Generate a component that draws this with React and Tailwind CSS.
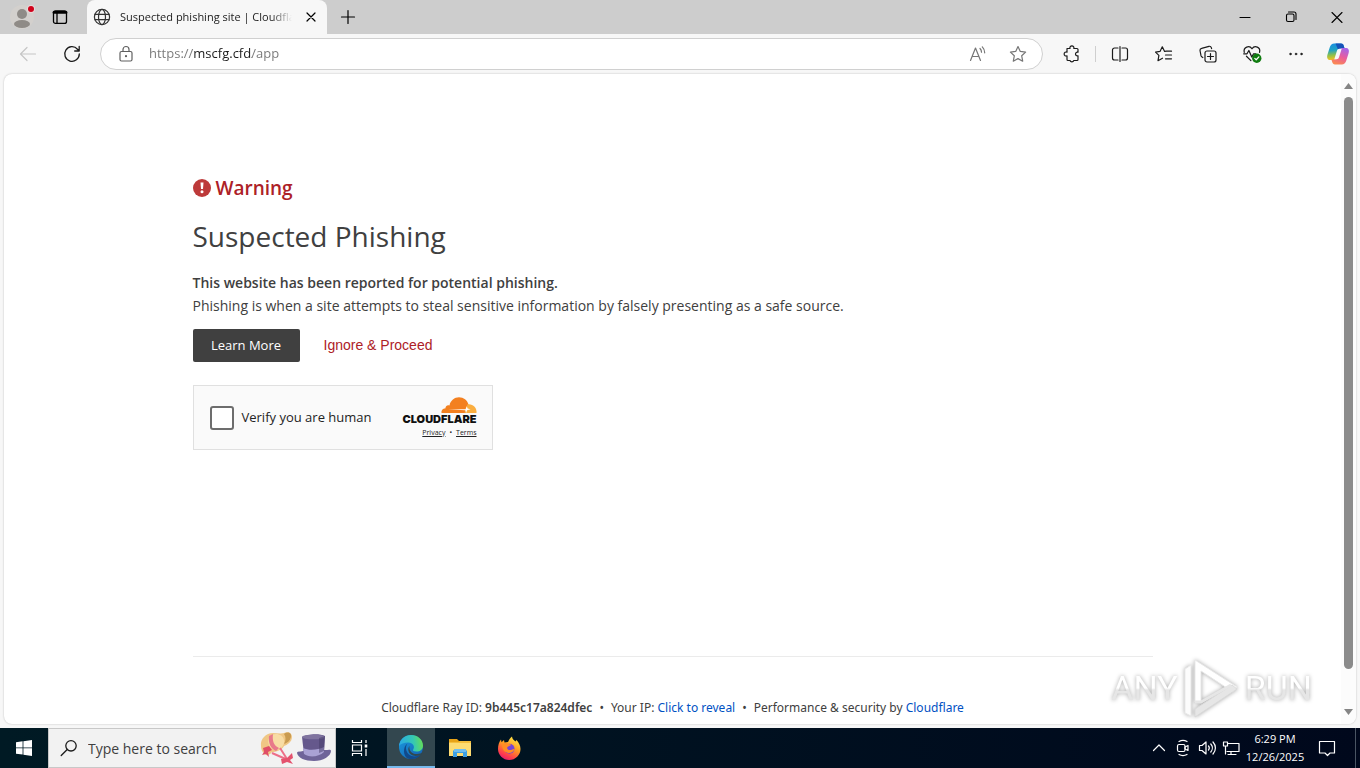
import { useState } from "react";

const ui = "font-['Open_Sans','Noto_Sans',sans-serif]";

/* ===== Browser icons ===== */
function Line({ size = 18, children, className = "", width = 1.2 }) {
  return (
    <svg width={size} height={size} viewBox="0 0 18 18" fill="none" stroke="currentColor" strokeWidth={width} strokeLinecap="round" strokeLinejoin="round" className={className} aria-hidden="true">
      {children}
    </svg>
  );
}

const Globe = () => (
  <Line width={1.2} className="shrink-0 text-[#333]">
    <circle cx="9" cy="9" r="7.6" />
    <ellipse cx="9" cy="9" rx="3.5" ry="7.6" />
    <path d="M2 6.3h14M2 11.7h14" />
  </Line>
);

const Copilot = () => (
  <svg width="24" height="24" viewBox="0 0 24 24" aria-hidden="true">
    <defs>
      <linearGradient id="cpA" x1="0.3" y1="0" x2="0.4" y2="1">
        <stop offset="0" stopColor="#1a8fe0" />
        <stop offset="0.4" stopColor="#20a3c4" />
        <stop offset="0.7" stopColor="#8fc04a" />
        <stop offset="1" stopColor="#fbc31c" />
      </linearGradient>
      <linearGradient id="cpB" x1="0.7" y1="0" x2="0.3" y2="1">
        <stop offset="0" stopColor="#a565e8" />
        <stop offset="0.5" stopColor="#ea5c9c" />
        <stop offset="1" stopColor="#fb8a50" />
      </linearGradient>
    </defs>
    <path d="M15 1.5c1.6 0 2.3.8 2.8 2.4l.8 2.6h-3c-1.5 0-2.5.8-3 2.4l-2 6.6c-.5 1.6-1.2 2.5-3 2.5H4.500c-3 0-4-2-3-5.500L3.700 5.500C4.600 2.700 6 1.500 8.200 1.500z" fill="url(#cpA)" />
    <path d="M9.500 1.500H15c1.600 0 2.300.8 2.800 2.400l.8 2.600h-3c-1.500 0-2.500.8-3 2.400z" fill="#1652b8" />
    <path d="M9 22.500c-1.600 0-2.300-.8-2.800-2.400L5.400 17.500h3c1.500 0 2.500-.8 3-2.400l2-6.600c.5-1.600 1.200-2.500 3-2.500h3.100c3 0 4 2 3 5.500l-2.200 7c-.9 2.800-2.300 4-4.500 4z" fill="url(#cpB)" />
    <path d="M8.300 17.300 10.900 9c.4-1.500 1.200-2.200 2.500-2.200h2.300l-2.600 8.300c-.5 1.500-1.200 2.200-2.500 2.200z" fill="#f8f8f8" />
  </svg>
);

function IconButton({ label, children, className = "" }) {
  return (
    <button type="button" aria-label={label} className={`flex h-8 w-8 shrink-0 items-center justify-center rounded hover:bg-black/5 ${className}`}>
      {children}
    </button>
  );
}

function TabBar() {
  return (
    <header className="flex h-[34px] shrink-0 items-stretch bg-[#cdcdcd]">
      <div className="flex w-[87px] shrink-0 items-center gap-[6px] pl-[6px]">
        <IconButton label="Profile">
          <svg width="28" height="28" viewBox="0 0 28 28" aria-hidden="true">
            <circle cx="14" cy="14" r="12" fill="#d3d0cd" />
            <circle cx="14" cy="11" r="5" fill="#8f8b87" />
            <ellipse cx="14" cy="21" rx="8" ry="4" fill="#8f8b87" />
            <circle cx="23" cy="6" r="4" fill="#e8d8d8" />
            <circle cx="23" cy="6" r="3" fill="#d0021b" />
          </svg>
        </IconButton>
        <IconButton label="Tab actions">
          <Line size={18} width={1.3}>
            <rect x="2.5" y="2.8" width="13" height="12.6" rx="2" />
            <path d="M3 4.400h12" strokeWidth="2.800" />
            <path d="M6 5v10" />
          </Line>
        </IconButton>
      </div>
      <div className="flex w-60 items-center gap-[9px] rounded-t-lg bg-[#f7f7f7] pr-[6px] pl-[6px]">
        <Globe />
        <span className="min-w-0 flex-1 overflow-hidden text-[11px] whitespace-nowrap text-[#1b1b1b] [mask-image:linear-gradient(to_right,black_88%,transparent)]">
          Suspected phishing site | Cloudflare
        </span>
        <button type="button" aria-label="Close tab" className="flex h-5 w-5 shrink-0 items-center justify-center rounded">
          <Line size={18}><path d="m5 5 8 8M13 5l-8 8" /></Line>
        </button>
      </div>
      <IconButton label="New tab" className="ml-[5px] self-center">
        <Line><path d="M9 2.500v13M2.500 9h13" /></Line>
      </IconButton>
      <div className="ml-auto flex">
        <button type="button" aria-label="Minimize" className="flex w-[46px] items-center justify-center"><Line width={1.1}><path d="M4 9.500h10" /></Line></button>
        <button type="button" aria-label="Restore" className="flex w-[46px] items-center justify-center">
          <Line width={1.1}><rect x="4.500" y="6" width="7.500" height="7.500" rx="1.500" /><path d="M6.500 4h5.500a2 2 0 0 1 2 2v5.500" /></Line>
        </button>
        <button type="button" aria-label="Close" className="flex w-[46px] items-center justify-center"><Line width={1.1}><path d="m4 4.500 10 10M14 4.500l-10 10" /></Line></button>
      </div>
    </header>
  );
}

function Toolbar() {
  const [url, setUrl] = useState("https://mscfg.cfd/app");
  return (
    <nav className="flex h-10 shrink-0 items-center bg-[#f7f7f7] pr-[6px] pl-3 text-[#1b1b1b]">
      <IconButton label="Back" className="text-[#c6c6c6]">
        <Line><path d="M16.500 9h-15M8 2.500 1.500 9 8 15.500" /></Line>
      </IconButton>
      <IconButton label="Refresh" className="ml-3">
        <Line width={1.3}><path d="M16.300 9A7.300 7.300 0 1 1 14.500 4.200L16 5.800M16.200 1.500v4.500h-4.500" /></Line>
      </IconButton>
      <div className="ml-3 flex h-8 min-w-0 flex-1 items-center rounded-full border border-[#d0d0d0] bg-white pr-2 pl-4">
        <Line className="shrink-0 text-[#606060]">
          <rect x="3" y="6.500" width="12" height="9.500" rx="1.500" />
          <path d="M6 6.500V4.500a3 3 0 0 1 6 0v2" />
          <circle cx="9" cy="11.200" r=".5" fill="currentColor" />
        </Line>
        <input
          type="text"
          aria-label="Address and search bar"
          value={url}
          onChange={(e) => setUrl(e.target.value)}
          className="ml-[14px] min-w-0 flex-1 bg-[linear-gradient(to_right,#767676_44px,#1b1b1b_44px,#1b1b1b_103px,#767676_103px)] bg-clip-text text-[13px] text-transparent outline-none"
        />
        <IconButton label="Read aloud" className="text-[#767676]">
          <Line>
            <path d="M1.500 15.500 6.500 3l5 12.500M3.200 11.500h6.600" />
            <path d="M11 3.500c1 1 1.500 2.200 1.500 3.700M13.300 1.800c1.600 1.600 2.400 3.500 2.400 6" />
          </Line>
        </IconButton>
        <IconButton label="Add to favorites" className="ml-2 text-[#767676]">
          <Line><path d="m9 1.500 2.300 4.900 5.300.7-3.900 3.700 1 5.400L9 13.600l-4.700 2.600 1-5.400L1.400 7.100l5.300-.7z" /></Line>
        </IconButton>
      </div>
      <IconButton label="Extensions" className="ml-[13px]">
        <Line width={1.2}>
          <path d="M4 3.500h3a2 2 0 1 1 3.800 0H14a1 1 0 0 1 1 1v2.700a1.900 1.900 0 1 0 0 3.600v3.700a1 1 0 0 1-1 1h-3.200a2 2 0 0 1-3.800 0H5a1 1 0 0 1-1-1v-3.700a2 2 0 1 1 0-3.600z" />
        </Line>
      </IconButton>
      <span className="mr-2 ml-[7px] h-4 w-px bg-[#cfcfcf]" />
      <div className="flex gap-3">
        <IconButton label="Split screen">
          <Line><path d="M7 3H3.500a2 2 0 0 0-2 2v8a2 2 0 0 0 2 2H7M11 3h3.500a2 2 0 0 1 2 2v8a2 2 0 0 1-2 2H11M9 1.500v15" /></Line>
        </IconButton>
        <IconButton label="Favorites">
          <Line><path d="m9.600 6.400 2-.2H16.500M9.600 6.400 7.300 1.800 5 6.400l-4.500.7 3.400 3.300-.9 5.300 4.500-2.500M10.500 10h6M10.500 13.800h6" /></Line>
        </IconButton>
        <IconButton label="Collections">
          <Line>
            <rect x="6" y="6" width="11" height="11" rx="2" />
            <path d="M11.500 8.500v6M8.500 11.500h6M3.800 12.500 3 12a2 2 0 0 1-1-1.300L1 5.500a2 2 0 0 1 1.600-2.200L10 1.300a2 2 0 0 1 2.300 1.400l.3 1" />
          </Line>
        </IconButton>
        <IconButton label="Browser essentials">
          <Line size={20} width={1.1}>
            <path d="M2 7.500C1 3 6.500.5 9 4.300 11.500.5 17 3 15.800 7.500M4 11l4 4M1.500 8.800h3l1.700-3 2.600 6 1.600-3h2" />
            <circle cx="13.300" cy="12.800" r="4.200" fill="#107c10" stroke="none" />
            <path d="m11.500 12.900 1.300 1.300 2.400-2.600" stroke="#fff" />
          </Line>
        </IconButton>
        <IconButton label="Settings and more">
          <Line><g fill="currentColor" strokeWidth=".4"><circle cx="3.500" cy="9" r="1" /><circle cx="9" cy="9" r="1" /><circle cx="14.500" cy="9" r="1" /></g></Line>
        </IconButton>
      </div>
      <IconButton label="Copilot" className="ml-[10px]"><Copilot /></IconButton>
    </nav>
  );
}

/* ===== Cloudflare widget ===== */
function Turnstile() {
  return (
    <div className="mt-[23px] flex h-[65px] w-[300px] items-center border border-[#e0e0e0] bg-[#fafafa] pr-[15px] pl-4">
      <label className="flex items-center gap-2 text-[13px] text-[#232323]">
        <input type="checkbox" className="h-6 w-6 appearance-none rounded-[3px] border-2 border-[#6d6d6d] bg-white checked:bg-[#c44d0e]" />
        Verify you are human
      </label>
      <div className="ml-auto flex flex-col items-end">
        <svg width="36" height="16" viewBox="0 0 36 16" aria-hidden="true">
          <path d="M.5 16c-.4-2.700 1-4.600 4-4.800-.3-2 1.800-3.700 4-2.800C9.500 3.500 13.500.3 18 .3c4.600 0 8.300 3 9.500 7.200L26 16z" fill="#f38020" />
          <path d="M26.500 7.300c5.300-.7 9.500 3 9 8.700H23.500z" fill="#faae40" />
          <path d="M7 12.300h17.500l1.300-3 .8 2.200 3 .8-3.500 1-1 2.700-.8-2.800z" fill="#fff" />
        </svg>
        <span className="font-['Inter',sans-serif] text-[11px] leading-3 font-black text-[#111]">CLOUDFLARE</span>
        <div className="mt-[2px] flex gap-1 text-[7px] leading-3 text-[#232323]">
          <a href="#privacy" className="underline">Privacy</a>
          <span>•</span>
          <a href="#terms" className="underline">Terms</a>
        </div>
      </div>
    </div>
  );
}

const markText = "bg-linear-to-b from-white from-50% to-[#e6e6e6] to-55% bg-clip-text text-transparent";

function Watermark() {
  return (
    <div className="pointer-events-none absolute right-11 bottom-1 flex items-center gap-[5px] font-['Roboto',sans-serif] text-[34px] leading-[40px] drop-shadow-[0_0_2px_#a8a8a8]">
      <span className={markText}>ANY</span>
      <svg width="57" height="64" viewBox="0 0 57 64" fill="none" strokeLinejoin="round" aria-hidden="true">
        <path d="M12 46V4l42 27-4 5-32-21v31z" fill="#fff" stroke="#e9e9e9" strokeWidth="1" />
        <path d="M8 9 2 13v44l6 3z" fill="#fcfcfc" stroke="#e9e9e9" strokeWidth="1" />
        <path d="m12 53 37-24 5 4-42 28z" fill="#e6e6e6" stroke="#dadada" strokeWidth="1" />
        <path d="M12 46h6l30-17" stroke="#e6e6e6" strokeWidth="3" />
      </svg>
      <span className={markText}>RUN</span>
    </div>
  );
}

function Page() {
  return (
    <main className="relative mx-1 mb-1 flex min-h-0 flex-1 overflow-hidden rounded-lg bg-white shadow-[0_0_2px_rgba(0,0,0,0.25)]">
      <div className="min-w-0 flex-1 overflow-hidden">
        <div className="mx-auto flex h-full max-w-[960px] flex-col text-[#404040]">
          <h2 className="mt-[99px] flex items-center gap-[5px] text-[19px] leading-[30px] font-semibold text-[#ad2127]">
            <svg width="18" height="18" viewBox="0 0 18 18" aria-hidden="true">
              <circle cx="9" cy="9" r="9" fill="#bd3a3a" />
              <path d="M7.500 3.500h3L10 10H8z" fill="#fff" />
              <circle cx="9" cy="12.800" r="1.500" fill="#fff" />
            </svg>
            Warning
          </h2>
          <h1 className="mt-3 text-[28px] leading-[42px]">Suspected Phishing</h1>
          <div className="mt-[14px] text-[14px] leading-[23px]">
            <strong className="font-semibold">This website has been reported for potential phishing.</strong>
            <p>Phishing is when a site attempts to steal sensitive information by falsely presenting as a safe source.</p>
          </div>
          <div className="mt-3 flex items-center gap-6">
            <button type="button" className="h-[33px] w-[107px] rounded-[2px] bg-[#404040] text-[13px] text-white">Learn More</button>
            <button type="button" className="font-['Liberation_Sans',Arial,sans-serif] text-[14px] text-[#ad2127]">Ignore &amp; Proceed</button>
          </div>
          <Turnstile />
          <footer className="mt-auto border-t border-[#ebebeb] pt-[41px] pb-[6px] text-center font-['Noto_Sans',sans-serif] text-[12px] leading-5">
            Cloudflare Ray ID: <strong className="font-semibold">9b445c17a824dfec</strong>
            <span className="mx-[7px]">•</span>
            Your IP: <button type="button" className="text-[#0051c3]">Click to reveal</button>
            <span className="mx-[7px]">•</span>
            Performance &amp; security by <a href="#cloudflare" className="text-[#0051c3]">Cloudflare</a>
          </footer>
        </div>
      </div>
      {/* scrollbar */}
      <div className="flex w-[15px] shrink-0 flex-col items-center bg-[#fcfcfc] pt-[9px] pb-[9px]">
        <svg width="9" height="6" viewBox="0 0 9 6" aria-hidden="true"><path d="M0 6 4.500 0 9 6z" fill="#858585" /></svg>
        <div className="mt-2 mb-10 w-[9px] flex-1 rounded-full bg-[#8b8b8b]" />
        <svg width="9" height="6" viewBox="0 0 9 6" aria-hidden="true"><path d="M0 0 4.500 6 9 0z" fill="#858585" /></svg>
      </div>
      <Watermark />
    </main>
  );
}

/* ===== Taskbar ===== */
const SunHat = () => (
  <svg width="34" height="34" viewBox="0 0 34 34" aria-hidden="true">
    <path d="M1 15C0 8 6 2 13 2c4 0 8 1 11 0 4-2 8 0 8 4 0 5-5 8-8 9-2 4-8 6-12 6-3 4-7 4-8 1-2-1-3-4-3-7z" fill="#f0c785" />
    <path d="M10 5c5-4 13-2 14 4 1 5-3 10-9 10-6-1-9-9-5-14z" fill="#f8dca4" />
    <path d="M24 3c4-3 8-1 7 3-1 4-4 6-7 7 2-4 2-7 0-10z" fill="#c99b50" />
    <path d="m9 5 4-2c-1 7 1 12 6 14l-3 3C11 18 8 12 9 5z" fill="#e8798a" />
    <path d="m3 17 6-2 3 4-4 2 1 5-3-3-4 1 2-3z" fill="#e04f68" />
    <path d="m20 17 7 11M12 22l16 7" stroke="#ed6f88" strokeWidth="2" />
    <path d="m21 28 6-1 5-5 1 5-3 2 3 4-6-2-5 2z" fill="#e4526e" />
  </svg>
);

const TopHat = () => (
  <svg width="34" height="28" viewBox="0 0 34 28" aria-hidden="true">
    <path d="M0 19c0-2 3-1 6-2l22-1c3 0 6-1 6 1 0 5-8 10-17 10S1 24 0 19z" fill="#6f6499" />
    <path d="M5 3c4-3 18-4 23-1l-1 16c-5 5-15 6-20 2z" fill="#65588c" />
    <path d="M6 14c6 3 15 2 21-1v5c-5 5-15 6-20 2z" fill="#a9a1d4" />
    <ellipse cx="16.500" cy="3" rx="11.500" ry="2.300" fill="#80749f" />
    <path d="M22 4v15l5-2 1-15z" fill="#463b68" opacity=".5" />
  </svg>
);

const Edge = () => (
  <svg width="26" height="26" viewBox="0 0 26 26" aria-hidden="true">
    <defs>
      <linearGradient id="edA" x1="0" y1=".5" x2="1" y2=".4"><stop offset="0" stopColor="#2aa9e6" /><stop offset=".6" stopColor="#35c8b3" /><stop offset="1" stopColor="#66de54" /></linearGradient>
      <linearGradient id="edB" x1="0" y1="0" x2=".8" y2="1"><stop offset="0" stopColor="#1b9bde" /><stop offset="1" stopColor="#1465b6" /></linearGradient>
    </defs>
    <circle cx="13" cy="13" r="12" fill="url(#edB)" />
    <path d="M1 12C1.500 5.500 7 1 13 1c7 0 12 5 12 10.500 0 4-3 6-6.500 6-3 0-4-1-3.300-2 2-3-.2-7-5-7C6 8.500 2.500 10 1 12z" fill="url(#edA)" />
    <path d="M9.500 9.500C6.500 13 8 20 13.500 22c4 1.200 7.500-.2 10-2.500C20 25 14 26 10 24.500 5 22.500 4.500 13 9.500 9.500z" fill="#114a8b" />
    <path d="M11.500 12c-1 5 3 8.500 8 8 2 0 4-.8 5-1.500l-.8 1.700c-2 1.300-5.700 2.300-8.700 1.300-4.500-1.500-6-6.500-3.500-9.500z" fill="#31484f" />
  </svg>
);

const Folder = () => (
  <svg width="24" height="20" viewBox="0 0 24 20" aria-hidden="true">
    <path d="M1 1h8l2 2h11v4H1z" fill="#e8a317" />
    <path d="M1 4h22v14H1z" fill="#fddb72" />
    <path d="M1 4h10l1-1h11v2H1z" fill="#f4bd3b" />
    <path d="M5 19v-6l2-2h10l2 2v6h-4v-4H9v4z" fill="#3da0e4" />
    <path d="M7 11h10l1 1v2H6v-2z" fill="#6fbdf0" />
  </svg>
);

const Firefox = () => (
  <svg width="24" height="24" viewBox="0 0 24 24" aria-hidden="true">
    <defs>
      <linearGradient id="ffx" x1=".8" y1="0" x2=".3" y2="1"><stop offset="0" stopColor="#fff04a" /><stop offset=".45" stopColor="#ff9a22" /><stop offset=".8" stopColor="#ff3f4b" /><stop offset="1" stopColor="#e51c70" /></linearGradient>
    </defs>
    <path d="M1 13C1 9 2 6 4 3.500l.5 2.700L7 4l.5 2.500L11 6c1-2.500 2.500-4.500 4-5.500.2 2.500 2 3.500 3.500 5l1-1.500c2.300 2.500 4 5.500 4 9C23.500 19 18.500 24 12.200 24 6 24 1 19 1 13z" fill="url(#ffx)" />
    <circle cx="12.500" cy="12.800" r="5" fill="#7544d8" />
    <path d="M5 9c1.500-2 4-2.500 6-1.500 1 .5 2 1 3.500 1-1 1.500-3 1.500-4 2.500-1 1.200.3 3 2.500 3 2 0 3-1.300 4.500-1-1 3-4 4.500-7 3.700C7 16 5 12.500 5 9z" fill="#ff8d24" />
  </svg>
);

function Taskbar() {
  const [query, setQuery] = useState("");
  return (
    <footer className="flex h-10 shrink-0 bg-linear-to-r from-[#001a24] to-[#00081c] text-white">
      <button type="button" aria-label="Start" className="flex w-12 items-center justify-center">
        <svg width="16" height="16" viewBox="0 0 16 16" fill="#fff" aria-hidden="true"><path d="M0 2.200 6.600 1.300v6.200H0zM7.400 1.200 16 0v7.500H7.400zM0 8.300h6.600v6.300L0 13.700zM7.400 8.300H16V16l-8.600-1.200z" /></svg>
      </button>
      <div className="flex w-72 items-center border border-[#c8c8c8] bg-[#f2f2f2] pr-1 pl-[11px] text-[#1b1b1b]">
        <Line className="shrink-0" width={1.3}><circle cx="11" cy="6.800" r="5.200" /><path d="m7.200 10.500-6 6" /></Line>
        <input
          type="text"
          aria-label="Search"
          placeholder="Type here to search"
          value={query}
          onChange={(e) => setQuery(e.target.value)}
          className="ml-[10px] min-w-0 flex-1 bg-transparent text-[14px] outline-none placeholder:text-[#404040]"
        />
        <div className="flex items-center gap-[3px]"><SunHat /><TopHat /></div>
      </div>
      <button type="button" aria-label="Task view" className="mr-[3px] flex w-12 items-center justify-center">
        <svg width="18" height="18" viewBox="0 0 18 18" fill="none" stroke="#fff" strokeWidth="1.200" aria-hidden="true">
          <path d="M1.500 1v2.500h9V1M1.500 17v-2.500h9V17M1.500 6h9v6h-9zM15 1v3M15 10v7" />
          <path d="M13.700 5.500h2.600v3h-2.600z" fill="#fff" stroke="none" />
        </svg>
      </button>
      <button type="button" aria-label="Microsoft Edge" className="flex w-12 items-center justify-center border-b-2 border-[#76b9ed] bg-[#33474f]"><Edge /></button>
      <button type="button" aria-label="File Explorer" className="flex w-[49px] items-center justify-center"><Folder /></button>
      <button type="button" aria-label="Firefox" className="flex w-[49px] items-center justify-center"><Firefox /></button>
      <div className="ml-auto flex items-center">
        <div className="flex items-center gap-[6px]">
          <Line><path d="m3.500 11.500 5.500-5.500 5.500 5.500" /></Line>
          <Line>
            <path d="M5 2.500c2.500-1.300 5.500-1.300 8 0M5 15.500c2.500 1.300 5.500 1.300 8 0" />
            <rect x="3.500" y="5.500" width="7.500" height="7" rx="1.500" />
            <path d="m11 8 3-1.500v5L11 10z" />
          </Line>
          <Line><path d="M1.500 6.500h2.500l4-3.500v12l-4-3.500H1.500zM10.500 7c1 1.200 1 2.800 0 4M12.800 5c2 2.300 2 5.700 0 8M15 3c3.200 3.500 3.200 8.500 0 12" /></Line>
          <Line><path d="M5.500 4.500h11.500v8H5M9 12.500v3M6 15.500h8M1.500 3h4v4h-4zM3.500 7v8" /></Line>
        </div>
        <div className="w-[70px] text-center text-[11px] leading-[18px]">
          <div>6:29 PM</div>
          <div>12/26/2025</div>
        </div>
        <button type="button" aria-label="Notifications" className="mr-[11px] flex w-[34px] items-center justify-center">
          <Line><path d="M1.500 2.500h15V14H12l-2.500 2.500L7 14H1.500z" /></Line>
        </button>
        <span className="h-full w-[5px] border-l border-[#4a5563]" />
      </div>
    </footer>
  );
}

export default function App() {
  return (
    <div className={`flex h-screen flex-col overflow-hidden bg-[#f7f7f7] ${ui}`}>
      <TabBar />
      <Toolbar />
      <Page />
      <Taskbar />
    </div>
  );
}
